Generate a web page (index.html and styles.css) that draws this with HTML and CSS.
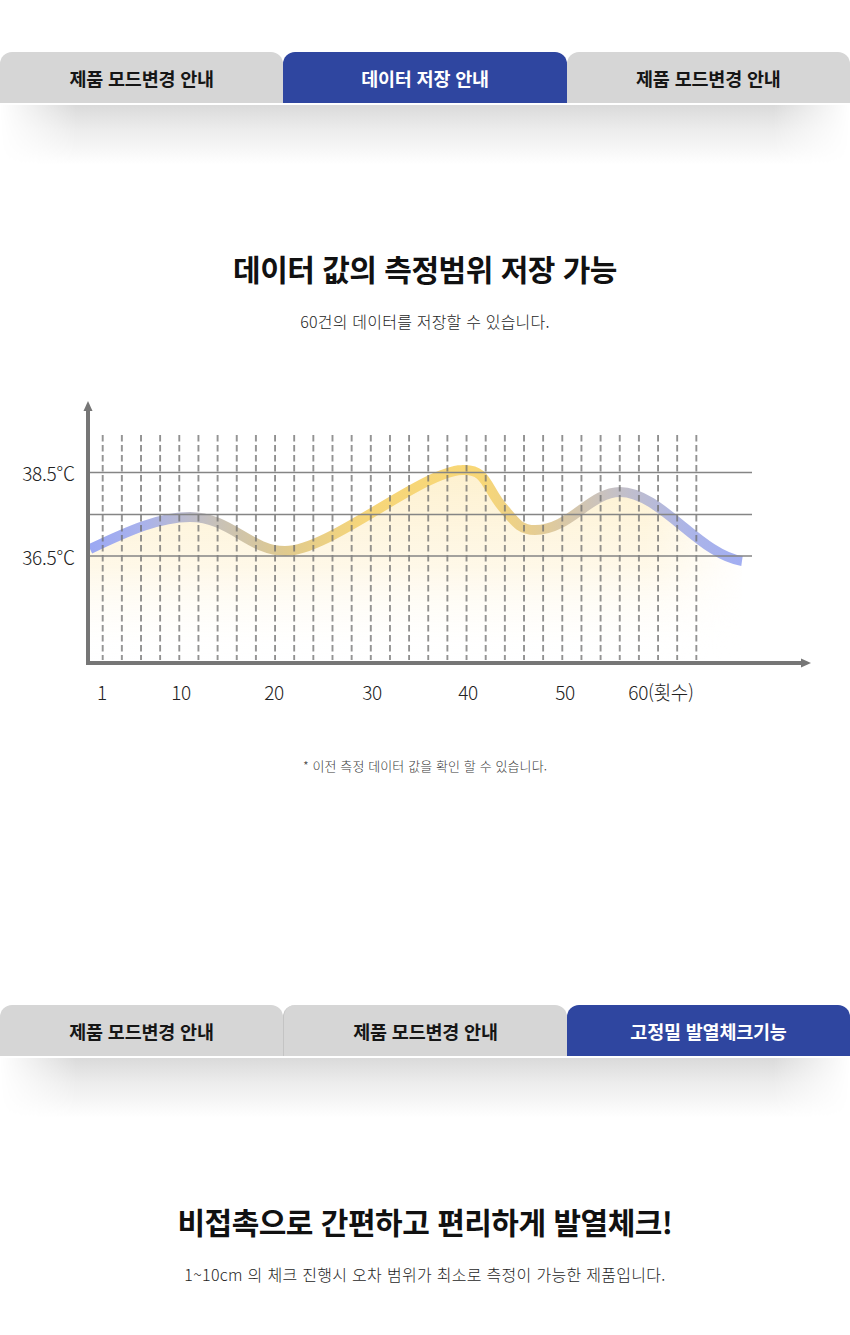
FILE: index.html
```html
<!DOCTYPE html>
<html lang="ko">
<head>
<meta charset="utf-8">
<title>데이터 저장 안내</title>
<link rel="stylesheet" href="styles.css">
</head>
<body>
<nav class="tabs tabs-top">
  <div class="tab">제품 모드변경 안내</div>
  <div class="tab tab-active">데이터 저장 안내</div>
  <div class="tab">제품 모드변경 안내</div>
</nav>
<div class="tab-shadow"></div>

<section class="section">
  <h2 class="title">데이터 값의 측정범위 저장 가능</h2>
  <p class="subtitle">60건의 데이터를 저장할 수 있습니다.</p>

  <svg class="chart" viewBox="0 380 850 340" width="850" height="340" xmlns="http://www.w3.org/2000/svg">
    <defs>
      <linearGradient id="lineGrad" gradientUnits="userSpaceOnUse" x1="90" y1="0" x2="742" y2="0">
        <stop offset="0" stop-color="#9ba8f3"/>
        <stop offset="0.08" stop-color="#a9b2ec"/>
        <stop offset="0.2" stop-color="#c9c2b6"/>
        <stop offset="0.3" stop-color="#e0ca8e"/>
        <stop offset="0.42" stop-color="#f6d67a"/>
        <stop offset="0.6" stop-color="#f8d776"/>
        <stop offset="0.68" stop-color="#e6cd92"/>
        <stop offset="0.8" stop-color="#c6c1c4"/>
        <stop offset="0.92" stop-color="#abb4e8"/>
        <stop offset="1" stop-color="#a2aef2"/>
      </linearGradient>
      <linearGradient id="fillGrad" gradientUnits="userSpaceOnUse" x1="0" y1="470" x2="0" y2="662">
        <stop offset="0" stop-color="#fdedc2" stop-opacity="0.8"/>
        <stop offset="0.5" stop-color="#fef3d8" stop-opacity="0.6"/>
        <stop offset="1" stop-color="#ffffff" stop-opacity="0"/>
      </linearGradient>
      <linearGradient id="fadeRight" gradientUnits="userSpaceOnUse" x1="0" y1="0" x2="850" y2="0">
        <stop offset="0.76" stop-color="#fff"/>
        <stop offset="0.88" stop-color="#000"/>
      </linearGradient>
      <mask id="fillMask">
        <rect x="0" y="380" width="850" height="340" fill="url(#fadeRight)"/>
      </mask>
      <pattern id="dashes" patternUnits="userSpaceOnUse" x="93.1" y="435" width="19.15" height="10">
        <rect x="8.9" y="0" width="1.4" height="6.5" fill="#6b6b6b"/>
      </pattern>
    </defs>

    <path class="area" d="M90,549 C130,530 160,517 190,517 C230,517 250,551 285,551 C330,551 420,472 462,470 C488,468 486,490 505,510 C515,522 520,530 535,530 C570,530 590,492 620,492 C660,492 700,555 742,561 L742,662 L90,662 Z" fill="url(#fillGrad)" mask="url(#fillMask)"/>
    <path class="curve" d="M90,549 C130,530 160,517 190,517 C230,517 250,551 285,551 C330,551 420,472 462,470 C488,468 486,490 505,510 C515,522 520,530 535,530 C570,530 590,492 620,492 C660,492 700,555 742,561" fill="none" stroke="url(#lineGrad)" stroke-width="10"/>

    <rect x="93.1" y="435" width="612.8" height="225" fill="url(#dashes)"/>

    <g stroke="#858585" stroke-width="1.6">
      <line x1="90" y1="472.5" x2="752" y2="472.5"/>
      <line x1="90" y1="514.5" x2="752" y2="514.5"/>
      <line x1="90" y1="556" x2="752" y2="556"/>
    </g>

    <g stroke="#767676" stroke-width="4" fill="none">
      <line x1="88" y1="409" x2="88" y2="665"/>
      <line x1="86" y1="663" x2="803" y2="663"/>
    </g>
    <polygon points="83.5,411 88,401 92.5,411" fill="#767676"/>
    <polygon points="801,658.5 811,663 801,667.5" fill="#767676"/>

    <g class="ylabel">
      <text x="75" y="481" text-anchor="end">38.5℃</text>
      <text x="75" y="565" text-anchor="end">36.5℃</text>
    </g>
    <g class="xlabel" text-anchor="middle">
      <text x="102" y="700">1</text>
      <text x="181" y="700">10</text>
      <text x="274" y="700">20</text>
      <text x="372" y="700">30</text>
      <text x="468" y="700">40</text>
      <text x="565" y="700">50</text>
      <text x="661" y="700">60(횟수)</text>
    </g>
  </svg>

  <p class="note">* 이전 측정 데이터 값을 확인 할 수 있습니다.</p>
</section>

<nav class="tabs tabs-bottom">
  <div class="tab">제품 모드변경 안내</div>
  <div class="tab tab-split">제품 모드변경 안내</div>
  <div class="tab tab-active">고정밀 발열체크기능</div>
</nav>
<div class="tab-shadow"></div>

<section class="section">
  <h2 class="title title-2">비접촉으로 간편하고 편리하게 발열체크!</h2>
  <p class="subtitle subtitle-2">1~10cm 의 체크 진행시 오차 범위가 최소로 측정이 가능한 제품입니다.</p>
</section>
</body>
</html>
```

FILE: styles.css
```css
* { box-sizing: border-box; }

html, body {
  margin: 0;
  padding: 0;
  background: #ffffff;
}

body {
  font-family: "Noto Sans CJK KR", "Noto Sans", sans-serif;
  color: #111;
  width: 850px;
  overflow-x: hidden;
}

.tabs {
  display: flex;
  height: 51px;
}

.tabs-top { margin-top: 52px; }
.tabs-bottom { margin-top: 230px; }

.tab {
  flex: 1 1 0;
  display: flex;
  align-items: center;
  justify-content: center;
  background: #d6d6d6;
  border-radius: 12px 12px 0 0;
  font-size: 18.5px;
  font-weight: 700;
  color: #161616;
  letter-spacing: -0.2px;
}

.tab-active {
  background: #2f46a0;
  color: #ffffff;
}

.tab-split {
  border-left: 1px solid #c4c4c4;
}

.tab-shadow {
  margin-top: 2px;
  height: 60px;
  background: linear-gradient(to bottom, #dadada 0%, #ececec 40%, #ffffff 100%);
  -webkit-mask-image: linear-gradient(to right, transparent 0%, #000 9%, #000 91%, transparent 100%);
  mask-image: linear-gradient(to right, transparent 0%, #000 9%, #000 91%, transparent 100%);
}

.section {
  display: flex;
  flex-direction: column;
  align-items: center;
}

.title {
  margin: 83px 0 0;
  font-size: 30px;
  line-height: 40px;
  font-weight: 700;
  color: #111;
  letter-spacing: -0.5px;
}

.subtitle {
  margin: 22px 0 0;
  font-size: 16px;
  line-height: 22px;
  font-weight: 300;
  color: #1e1e1e;
  letter-spacing: 0.2px;
}

.subtitle-2 {
  letter-spacing: 0.3px;
}

.chart {
  display: block;
  margin-top: 48px;
  align-self: stretch;
}

.ylabel text, .xlabel text {
  font-family: "Noto Sans CJK KR", "Noto Sans", sans-serif;
  font-size: 19px;
  font-weight: 300;
  fill: #222;
  letter-spacing: -0.3px;
}

.note {
  margin: 37px 0 0;
  font-size: 13px;
  line-height: 18px;
  font-weight: 300;
  color: #3a3a3a;
  letter-spacing: 0.1px;
}
```
